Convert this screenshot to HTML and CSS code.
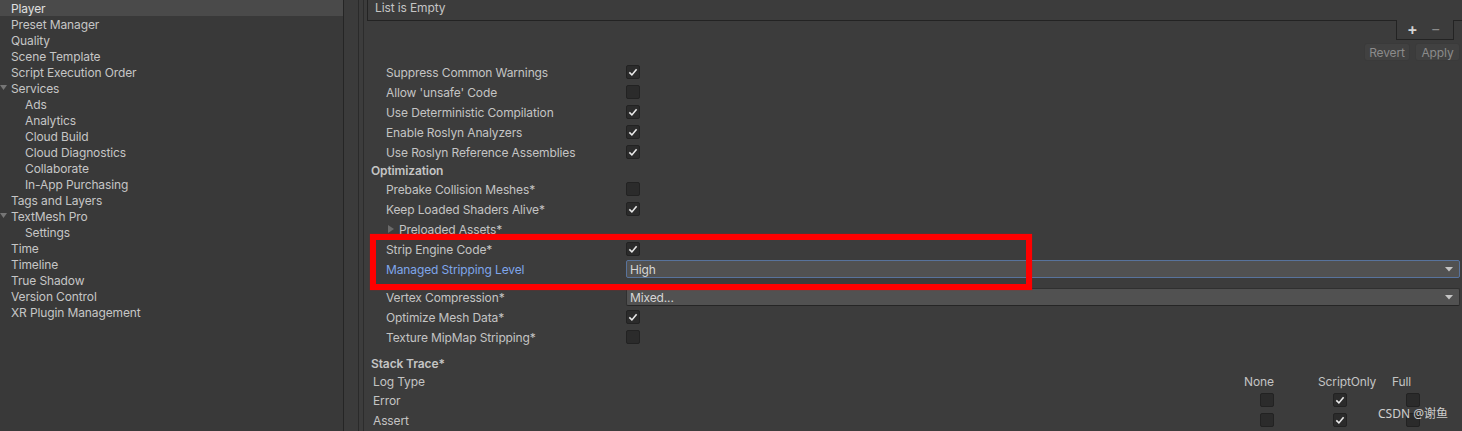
FILE: index.html
```html
<!DOCTYPE html>
<html>
<head>
<meta charset="utf-8">
<link rel="stylesheet" href="styles.css">
</head>
<body>
<div class="window">
  <nav class="sidebar">
    <div class="tree-item top selected">Player</div>
    <div class="tree-item top">Preset Manager</div>
    <div class="tree-item top">Quality</div>
    <div class="tree-item top">Scene Template</div>
    <div class="tree-item top">Script Execution Order</div>
    <div class="tree-item fold"><svg class="fold-icon" width="11" height="16" viewBox="0 0 11 16"><path d="M0 5 L7 5 L3.5 10 Z" fill="#767676"/></svg>Services</div>
    <div class="tree-item child">Ads</div>
    <div class="tree-item child">Analytics</div>
    <div class="tree-item child">Cloud Build</div>
    <div class="tree-item child">Cloud Diagnostics</div>
    <div class="tree-item child">Collaborate</div>
    <div class="tree-item child">In-App Purchasing</div>
    <div class="tree-item top">Tags and Layers</div>
    <div class="tree-item fold"><svg class="fold-icon" width="11" height="16" viewBox="0 0 11 16"><path d="M0 5 L7 5 L3.5 10 Z" fill="#767676"/></svg>TextMesh Pro</div>
    <div class="tree-item child">Settings</div>
    <div class="tree-item top">Time</div>
    <div class="tree-item top">Timeline</div>
    <div class="tree-item top">True Shadow</div>
    <div class="tree-item top">Version Control</div>
    <div class="tree-item top">XR Plugin Management</div>
  </nav>
  <div class="splitter"></div>
  <main class="inspector">
    <div class="scroll">
      <div class="list-box"><span>List is Empty</span></div>
      <div class="list-footer"><span class="plus">+</span><span class="minus">−</span></div>
      <div class="actions">
        <button class="btn revert">Revert</button>
        <button class="btn apply">Apply</button>
      </div>

      <div class="prop"><span class="label">Suppress Common Warnings</span><span class="check on"><svg width="14" height="14" viewBox="0 0 14 14"><path d="M3.3 7.4 L5.9 9.9 L10.6 4.2" fill="none" stroke="#e8e8e8" stroke-width="1.6"/></svg></span></div>
      <div class="prop"><span class="label">Allow 'unsafe' Code</span><span class="check"></span></div>
      <div class="prop"><span class="label">Use Deterministic Compilation</span><span class="check on"><svg width="14" height="14" viewBox="0 0 14 14"><path d="M3.3 7.4 L5.9 9.9 L10.6 4.2" fill="none" stroke="#e8e8e8" stroke-width="1.6"/></svg></span></div>
      <div class="prop"><span class="label">Enable Roslyn Analyzers</span><span class="check on"><svg width="14" height="14" viewBox="0 0 14 14"><path d="M3.3 7.4 L5.9 9.9 L10.6 4.2" fill="none" stroke="#e8e8e8" stroke-width="1.6"/></svg></span></div>
      <div class="prop"><span class="label">Use Roslyn Reference Assemblies</span><span class="check on"><svg width="14" height="14" viewBox="0 0 14 14"><path d="M3.3 7.4 L5.9 9.9 L10.6 4.2" fill="none" stroke="#e8e8e8" stroke-width="1.6"/></svg></span></div>

      <div class="section-header opt">Optimization</div>
      <div class="prop"><span class="label">Prebake Collision Meshes*</span><span class="check"></span></div>
      <div class="prop"><span class="label">Keep Loaded Shaders Alive*</span><span class="check on"><svg width="14" height="14" viewBox="0 0 14 14"><path d="M3.3 7.4 L5.9 9.9 L10.6 4.2" fill="none" stroke="#e8e8e8" stroke-width="1.6"/></svg></span></div>
      <div class="prop"><span class="label foldout"><svg class="fold-right" width="13" height="10" viewBox="0 0 13 10"><path d="M2 1 L8 5 L2 9 Z" fill="#6a6a6a"/></svg>Preloaded Assets*</span></div>
      <div class="prop"><span class="label">Strip Engine Code*</span><span class="check on"><svg width="14" height="14" viewBox="0 0 14 14"><path d="M3.3 7.4 L5.9 9.9 L10.6 4.2" fill="none" stroke="#e8e8e8" stroke-width="1.6"/></svg></span></div>
      <div class="prop"><span class="label modified">Managed Stripping Level</span><span class="dropdown focused"><span>High</span><svg width="10" height="8" viewBox="0 0 10 8"><path d="M1 2 L9 2 L5 6.5 Z" fill="#c4c4c4"/></svg></span></div>
      <div class="prop spaced"><span class="label">Vertex Compression*</span><span class="dropdown"><span>Mixed...</span><svg width="10" height="8" viewBox="0 0 10 8"><path d="M1 2 L9 2 L5 6.5 Z" fill="#c4c4c4"/></svg></span></div>
      <div class="prop"><span class="label">Optimize Mesh Data*</span><span class="check on"><svg width="14" height="14" viewBox="0 0 14 14"><path d="M3.3 7.4 L5.9 9.9 L10.6 4.2" fill="none" stroke="#e8e8e8" stroke-width="1.6"/></svg></span></div>
      <div class="prop"><span class="label">Texture MipMap Stripping*</span><span class="check"></span></div>

      <div class="section-header stack">Stack Trace*</div>
      <div class="trace-grid">
        <div class="trace-row head">
          <span class="trace-label">Log Type</span>
          <span class="col-head none">None</span>
          <span class="col-head">ScriptOnly</span>
          <span class="col-head">Full</span>
        </div>
        <div class="trace-row">
          <span class="trace-label">Error</span>
          <span class="cell c1"><span class="check"></span></span>
          <span class="cell c2"><span class="check on"><svg width="14" height="14" viewBox="0 0 14 14"><path d="M3.3 7.4 L5.9 9.9 L10.6 4.2" fill="none" stroke="#e8e8e8" stroke-width="1.6"/></svg></span></span>
          <span class="cell c3"><span class="check"></span></span>
        </div>
        <div class="trace-row">
          <span class="trace-label">Assert</span>
          <span class="cell c1"><span class="check"></span></span>
          <span class="cell c2"><span class="check on"><svg width="14" height="14" viewBox="0 0 14 14"><path d="M3.3 7.4 L5.9 9.9 L10.6 4.2" fill="none" stroke="#e8e8e8" stroke-width="1.6"/></svg></span></span>
          <span class="cell c3"><span class="check"></span></span>
        </div>
      </div>
    </div>
  </main>
  <div class="highlight"></div>
  <div class="watermark">CSDN @谢鱼</div>
</div>
</body>
</html>
```
FILE: styles.css
```css
* { box-sizing: border-box; }
html, body {
  margin: 0;
  padding: 0;
  background: #3c3c3c;
  width: 1462px;
  height: 431px;
  overflow: hidden;
}
body {
  font-family: Inter, "Noto Sans", "Noto Sans CJK SC", sans-serif;
  font-size: 12px;
  letter-spacing: -0.12px;
  color: #c4c4c4;
}
.window {
  position: relative;
  display: flex;
  width: 1462px;
  height: 431px;
}

/* ---------- sidebar ---------- */
.sidebar {
  width: 344px;
  flex: none;
  background: #393939;
  border-right: 1px solid #252525;
  display: flex;
  flex-direction: column;
}
.tree-item {
  height: 16px;
  line-height: 14px;
  padding-top: 2px;
  white-space: nowrap;
  color: #c6c6c6;
  display: flex;
  align-items: center;
}
.tree-item.top { padding-left: 11px; }
.tree-item.child { padding-left: 25px; }
.tree-item.fold { padding-left: 0; }
.tree-item.selected { background: #4a4a4a; color: #e0e0e0; }
.fold-icon { flex: none; display: block; margin-top: -2px; }

.splitter {
  width: 14px;
  flex: none;
  background: #3b3b3b;
}

/* ---------- inspector ---------- */
.inspector {
  flex: 1;
  border-left: 1px solid #2a2a2a;
  padding-left: 4px;
  background: #3c3c3c;
  overflow: hidden;
}
.scroll {
  height: 100%;
  border-left: 1px solid #2c2c2c;
  display: flex;
  flex-direction: column;
  overflow: hidden;
}
.list-box {
  margin: -1px -10px 0 3px;
  height: 22px;
  border: 1px solid #232323;
  padding-left: 7px;
  line-height: 15px;
  color: #c4c4c4;
}
.list-footer {
  align-self: flex-end;
  margin-top: -1px;
  margin-right: 8px;
  width: 58px;
  height: 20px;
  background: #3c3c3c;
  border: 1px solid #232323;
  border-top: none;
  display: flex;
  align-items: center;
  gap: 13px;
  padding: 0 0 2px 10px;
  position: relative;
  z-index: 1;
}
.plus { color: #d4d4d4; font-size: 16px; font-weight: 600; line-height: 16px; }
.minus { color: #8a8a8a; font-size: 15px; line-height: 16px; }
.actions {
  display: flex;
  justify-content: flex-end;
  gap: 5px;
  margin-top: 3px;
  margin-right: 2px;
  height: 18px;
}
.btn {
  font-family: inherit;
  font-size: 12px;
  letter-spacing: inherit;
  color: #8b8b8b;
  background: #414141;
  border: 1px solid #3a3a3a;
  border-radius: 3px;
  padding: 0;
  height: 18px;
  line-height: 15px;
}
.btn.revert { width: 46px; }
.btn.apply { width: 45px; }

.prop {
  display: flex;
  align-items: center;
  height: 20px;
  flex: none;
  padding-left: 22px;
  padding-right: 2px;
}
.actions + .prop { margin-top: 1px; }
.prop.spaced { margin-top: 8px; }
.label {
  width: 240px;
  flex: none;
  white-space: nowrap;
  color: #c4c4c4;
}
.label.modified { color: #7fa6ea; }
.label.foldout { display: flex; align-items: center; }
.fold-right { display: block; }

.check {
  width: 14px;
  height: 14px;
  flex: none;
  background: #2b2b2b;
  border: 1px solid #222;
  border-radius: 2px;
  display: flex;
  align-items: center;
  justify-content: center;
}
.check svg { display: block; margin: -1px; }

.dropdown {
  flex: 1;
  height: 18px;
  background: #515151;
  border: 1px solid #303030;
  border-bottom-color: #252525;
  border-radius: 2px;
  display: flex;
  align-items: center;
  justify-content: space-between;
  padding: 0 5px 0 3px;
  color: #d6d6d6;
}
.dropdown.focused { border-color: #58739c; }
.dropdown svg { display: block; }

.section-header {
  font-weight: 600;
  padding-left: 7px;
  height: 17px;
  line-height: 17px;
  flex: none;
}
.section-header.stack { margin-top: 8px; }

.trace-grid { display: flex; flex-direction: column; }
.trace-row {
  display: grid;
  grid-template-columns: 1fr 74px 74px 70px;
  align-items: center;
  height: 20px;
  padding-left: 9px;
}
.trace-row.head { height: 18px; }
.trace-label { color: #c4c4c4; }
.col-head { color: #c4c4c4; }
.cell { display: flex; }
.cell.c1 { padding-left: 16px; }
.cell.c2 { padding-left: 15px; }
.cell.c3 { padding-left: 14px; }

/* ---------- overlays ---------- */
.highlight {
  position: absolute;
  left: 370px;
  top: 234px;
  width: 662px;
  height: 56px;
  border: 6px solid #ff0000;
  box-shadow: 0 0 1px rgba(255,0,0,0.6);
  pointer-events: none;
}
.watermark {
  position: absolute;
  left: 1378px;
  top: 406px;
  font-family: "Noto Sans", "Noto Sans CJK SC", sans-serif;
  font-size: 12px;
  line-height: 16px;
  letter-spacing: 0;
  color: rgba(235,235,235,0.85);
}
```
